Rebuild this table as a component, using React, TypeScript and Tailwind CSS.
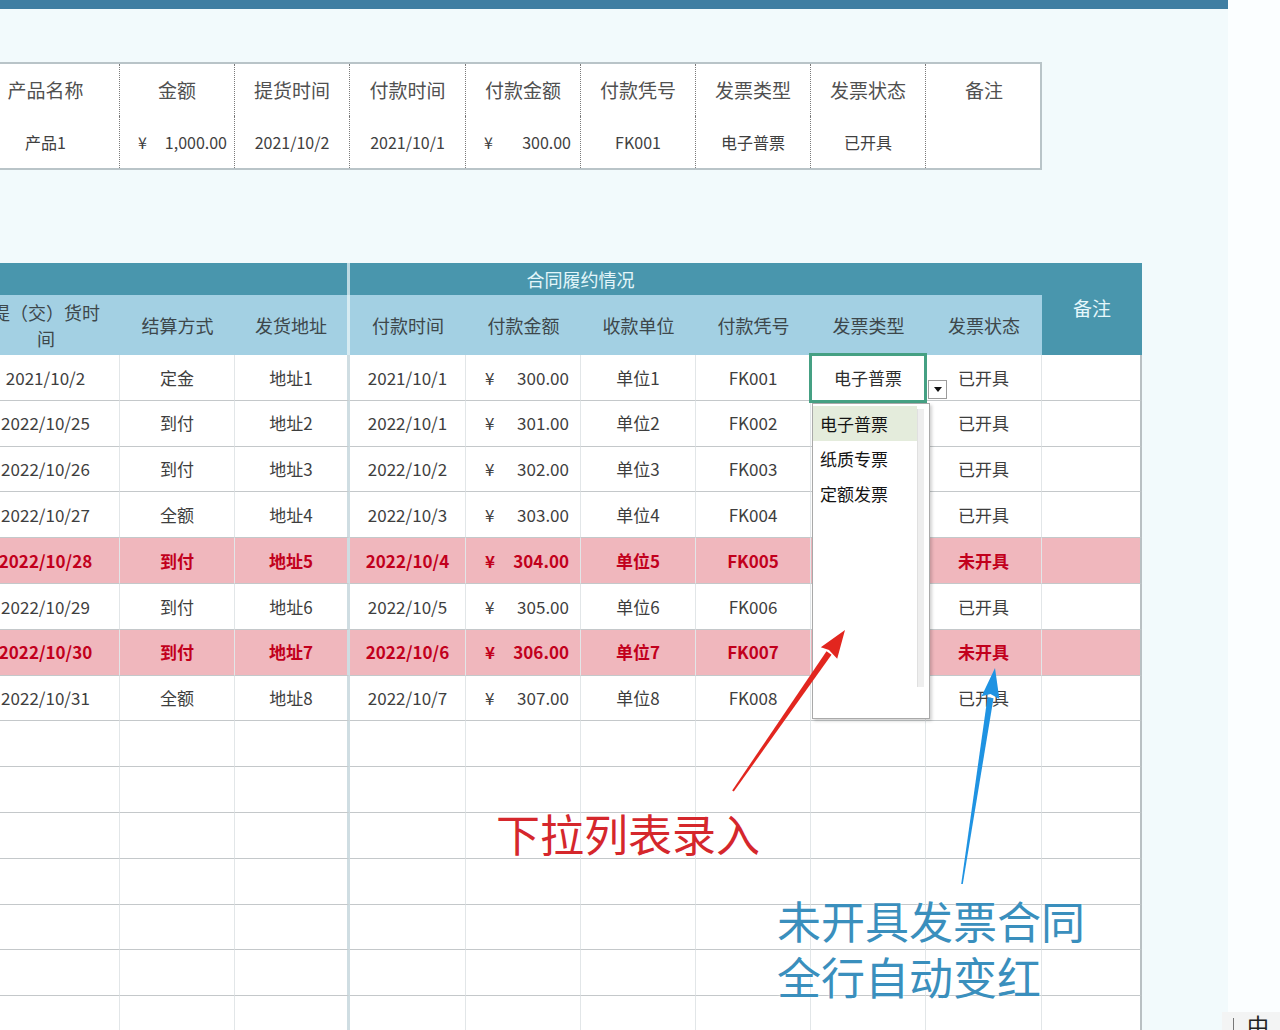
import React from 'react';

type Row = {
  d: string;
  pay: string;
  addr: string;
  pt: string;
  amt: string;
  unit: string;
  no: string;
  st: string;
  red?: boolean;
};

const rows: Row[] = [
  { d: '2021/10/2', pay: '定金', addr: '地址1', pt: '2021/10/1', amt: '300.00', unit: '单位1', no: 'FK001', st: '已开具' },
  { d: '2022/10/25', pay: '到付', addr: '地址2', pt: '2022/10/1', amt: '301.00', unit: '单位2', no: 'FK002', st: '已开具' },
  { d: '2022/10/26', pay: '到付', addr: '地址3', pt: '2022/10/2', amt: '302.00', unit: '单位3', no: 'FK003', st: '已开具' },
  { d: '2022/10/27', pay: '全额', addr: '地址4', pt: '2022/10/3', amt: '303.00', unit: '单位4', no: 'FK004', st: '已开具' },
  { d: '2022/10/28', pay: '到付', addr: '地址5', pt: '2022/10/4', amt: '304.00', unit: '单位5', no: 'FK005', st: '未开具', red: true },
  { d: '2022/10/29', pay: '到付', addr: '地址6', pt: '2022/10/5', amt: '305.00', unit: '单位6', no: 'FK006', st: '已开具' },
  { d: '2022/10/30', pay: '到付', addr: '地址7', pt: '2022/10/6', amt: '306.00', unit: '单位7', no: 'FK007', st: '未开具', red: true },
  { d: '2022/10/31', pay: '全额', addr: '地址8', pt: '2022/10/7', amt: '307.00', unit: '单位8', no: 'FK008', st: '已开具' },
];

const topHeads = ['产品名称', '金额', '提货时间', '付款时间', '付款金额', '付款凭号', '发票类型', '发票状态', '备注'];

// right border per column of the contract table
const colBorder = (i: number) => {
  if (i === 2) return 'border-r-[3px] border-r-[#cfdde2]';
  if (i === 9) return 'border-r-2 border-r-[#b9c0c3]';
  return 'border-r border-r-[#e2e6e8]';
};

const DataCell = ({ i, children, className = '' }: { i: number; children?: React.ReactNode; className?: string }) => (
  <div className={`h-[45.8px] flex items-center justify-center border-b border-b-[#c4c8ca] ${colBorder(i)} ${className}`}>
    {children}
  </div>
);

const TopTable = () => (
  <div className="ml-[-28px] mt-[53px] w-[1070px] bg-white border-y-2 border-r-2 border-[#b9c4c8] grid grid-cols-[148px_115px_115px_116px_115px_115px_115px_115px_116px]">
    {topHeads.map((h, i) => (
      <div
        key={h}
        className={`h-[52px] flex items-center justify-center text-[19px] text-[#505050] ${i < 8 ? 'border-r border-dotted border-[#7a7a7a]' : ''}`}
      >
        {h}
      </div>
    ))}
    <div className="h-[52px] flex items-center justify-center text-[16px] text-[#404040] border-r border-dotted border-[#7a7a7a]">产品1</div>
    <div className="h-[52px] flex items-center justify-between pl-[18px] pr-[7px] text-[16px] text-[#404040] border-r border-dotted border-[#7a7a7a]">
      <span>¥</span>
      <span>1,000.00</span>
    </div>
    <div className="h-[52px] flex items-center justify-center text-[16px] text-[#404040] border-r border-dotted border-[#7a7a7a]">2021/10/2</div>
    <div className="h-[52px] flex items-center justify-center text-[16px] text-[#404040] border-r border-dotted border-[#7a7a7a]">2021/10/1</div>
    <div className="h-[52px] flex items-center justify-between pl-[18px] pr-[9px] text-[16px] text-[#404040] border-r border-dotted border-[#7a7a7a]">
      <span>¥</span>
      <span>300.00</span>
    </div>
    <div className="h-[52px] flex items-center justify-center text-[16px] text-[#404040] border-r border-dotted border-[#7a7a7a]">FK001</div>
    <div className="h-[52px] flex items-center justify-center text-[16px] text-[#404040] border-r border-dotted border-[#7a7a7a]">电子普票</div>
    <div className="h-[52px] flex items-center justify-center text-[16px] text-[#404040] border-r border-dotted border-[#7a7a7a]">已开具</div>
    <div className="h-[52px]" />
  </div>
);

const ContractTable = () => {
  const heads = ['结算方式', '发货地址', '付款时间', '付款金额', '收款单位', '付款凭号', '发票类型', '发票状态'];
  return (
    <div className="ml-[-28px] mt-[93px] w-[1170px] grid grid-cols-[148px_115px_115px_116px_115px_115px_115px_115px_116px_100px]">
      {/* group header */}
      <div className="col-span-3 h-[32px] bg-[#4996ad] border-r-[3px] border-r-[#bcd9e2]" />
      <div className="col-span-4 h-[32px] bg-[#4996ad] flex items-center justify-center text-[18px] text-[#e4f6fa]">合同履约情况</div>
      <div className="col-span-2 h-[32px] bg-[#4996ad]" />
      <div className="row-span-2 bg-[#4996ad] flex items-center justify-center pb-[2px] text-[19px] text-[#e6f7fb]">备注</div>

      {/* column header */}
      <div className="h-[60px] bg-[#a3d0e3] flex flex-col items-center justify-center text-[18px] leading-[26px] text-[#3d474b]">
        <span>提（交）货时</span>
        <span>间</span>
      </div>
      {heads.map((h, i) => (
        <div
          key={h}
          className={`h-[60px] bg-[#a3d0e3] flex items-center justify-center text-[18px] text-[#3d474b] ${i === 1 ? 'border-r-[3px] border-r-[#d6ebf2]' : ''}`}
        >
          {h}
        </div>
      ))}

      {/* data rows, invoice type column sits under the open dropdown */}
      {rows.map((r) => {
        const tone = r.red ? 'bg-[#f0b7bd] text-[#c2001c] font-bold' : 'bg-white text-[#3e3e3e]';
        return (
          <React.Fragment key={r.no}>
            <DataCell i={0} className={`${tone} text-[17px]`}>{r.d}</DataCell>
            <DataCell i={1} className={`${tone} text-[17px]`}>{r.pay}</DataCell>
            <DataCell i={2} className={`${tone} text-[17px]`}>{r.addr}</DataCell>
            <DataCell i={3} className={`${tone} text-[17px]`}>{r.pt}</DataCell>
            <DataCell i={4} className={`${tone} text-[17px] !justify-between pl-[19px] pr-[11px]`}>
              <span>¥</span>
              <span>{r.amt}</span>
            </DataCell>
            <DataCell i={5} className={`${tone} text-[17px]`}>{r.unit}</DataCell>
            <DataCell i={6} className={`${tone} text-[17px]`}>{r.no}</DataCell>
            <DataCell i={7} className={tone} />
            <DataCell i={8} className={`${tone} text-[17px]`}>{r.st}</DataCell>
            <DataCell i={9} className={tone} />
          </React.Fragment>
        );
      })}

      {/* empty rows */}
      {Array.from({ length: 7 }).map((_, k) => (
        <React.Fragment key={k}>
          {Array.from({ length: 10 }).map((__, i) => (
            <DataCell key={i} i={i} className="bg-white" />
          ))}
        </React.Fragment>
      ))}
    </div>
  );
};

const Dropdown = () => (
  <>
    {/* active cell */}
    <div className="absolute left-[809px] top-[353px] w-[118px] h-[50px] bg-white border-[3px] border-[#45a083] flex items-center justify-center text-[17px] text-[#2e2e2e]">
      电子普票
    </div>
    {/* arrow button */}
    <div className="absolute left-[928px] top-[380px] w-[19px] h-[19px] bg-white border border-[#9c9c9c] flex items-center justify-center">
      <div className="w-0 h-0 border-l-[4px] border-r-[4px] border-t-[5px] border-l-transparent border-r-transparent border-t-[#111]" />
    </div>
    {/* list */}
    <div className="absolute left-[812px] top-[403px] w-[118px] h-[316px] bg-white border border-[#a9a9a9] shadow-[2px_2px_3px_rgba(0,0,0,0.18)] flex">
      <div className="flex-1 pt-[2px] flex flex-col">
        <div className="h-[35px] bg-[#e4ecdc] flex items-center pl-[7px] text-[17px] text-[#141414]">电子普票</div>
        <div className="h-[35px] flex items-center pl-[7px] text-[17px] text-[#141414]">纸质专票</div>
        <div className="h-[35px] flex items-center pl-[7px] text-[17px] text-[#141414]">定额发票</div>
      </div>
      <div className="w-[7px] mr-[5px] mt-[5px] h-[278px] bg-[#eeeeee] border-l border-[#e0e0e0]" />
    </div>
  </>
);

const Arrows = () => (
  <svg className="absolute left-0 top-0 pointer-events-none" width="1280" height="1030" viewBox="0 0 1280 1030">
    {/* red */}
    <polygon points="733.8,791.6 732.2,790.4 826.5,651.3 831.5,654.7" fill="#e2261f" />
    <polygon points="845,630 820.8,647.3 829,650 837.2,658.7" fill="#e2261f" />
    {/* blue */}
    <polygon points="962.8,884.1 961.2,883.9 987.5,697.2 993.5,698.2" fill="#1f93e2" />
    <polygon points="995,668 981.6,696.3 990.5,694 999.4,699.1" fill="#1f93e2" />
  </svg>
);

export default function App() {
  return (
    <div className="relative w-[1280px] h-[1030px] overflow-hidden flex bg-[#fbfeff] font-['Noto_Sans_CJK_SC','Noto_Sans',sans-serif]">
      <div className="w-[1228px] h-full bg-[#f2fafc] flex flex-col">
        <div className="h-[9px] bg-[#3f7ea2] shrink-0" />
        <TopTable />
        <ContractTable />
      </div>

      <Dropdown />
      <Arrows />

      {/* annotations */}
      <div className="absolute left-[496px] top-[811px] text-[44px] leading-[44px] text-[#d5272c] [text-shadow:0_0_3px_#ffffff]">
        下拉列表录入
      </div>
      <div className="absolute left-[777px] top-[898px] text-[44px] leading-[44px] text-[#3a8fbd] [text-shadow:0_0_3px_#ffffff]">
        未开具发票合同
      </div>
      <div className="absolute left-[777px] top-[954px] text-[44px] leading-[44px] text-[#3a8fbd] [text-shadow:0_0_3px_#ffffff]">
        全行自动变红
      </div>

      {/* input method indicator */}
      <div className="absolute left-[1222px] top-[1012px] w-[58px] h-[18px] bg-[#f3f4f4] flex items-start overflow-hidden">
        <div className="ml-[11px] mt-[6px] w-px h-[12px] bg-[#777]" />
        <span className="ml-[13px] mt-[1px] text-[22px] leading-[22px] text-[#222]">中</span>
      </div>
    </div>
  );
}
